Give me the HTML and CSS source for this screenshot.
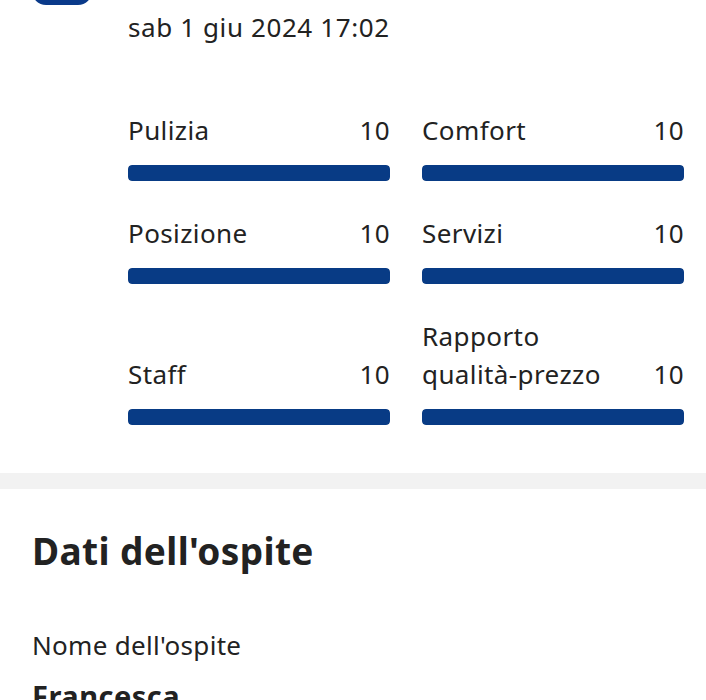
FILE: index.html
```html
<!DOCTYPE html>
<html lang="it">
<head>
<meta charset="utf-8">
<link rel="stylesheet" href="styles.css">
</head>
<body>
<section class="review">
  <div class="review-head">
    <div class="avatar"></div>
    <div class="meta">
      <div class="date">sab 1 giu 2024 17:02</div>
    </div>
  </div>
  <div class="scores">
    <div class="score">
      <div class="score-row"><span class="label">Pulizia</span><span class="value">10</span></div>
      <div class="bar"><div class="fill" style="width:100%"></div></div>
    </div>
    <div class="score">
      <div class="score-row"><span class="label">Comfort</span><span class="value">10</span></div>
      <div class="bar"><div class="fill" style="width:100%"></div></div>
    </div>
    <div class="score">
      <div class="score-row"><span class="label">Posizione</span><span class="value">10</span></div>
      <div class="bar"><div class="fill" style="width:100%"></div></div>
    </div>
    <div class="score">
      <div class="score-row"><span class="label">Servizi</span><span class="value">10</span></div>
      <div class="bar"><div class="fill" style="width:100%"></div></div>
    </div>
    <div class="score">
      <div class="score-row"><span class="label">Staff</span><span class="value">10</span></div>
      <div class="bar"><div class="fill" style="width:100%"></div></div>
    </div>
    <div class="score">
      <div class="score-row"><span class="label">Rapporto<br>qualità-prezzo</span><span class="value">10</span></div>
      <div class="bar"><div class="fill" style="width:100%"></div></div>
    </div>
  </div>
</section>
<div class="divider"></div>
<section class="guest">
  <h2 class="guest-title">Dati dell'ospite</h2>
  <div class="field-label">Nome dell'ospite</div>
  <div class="field-value">Francesca</div>
</section>
</body>
</html>
```
FILE: styles.css
```css
html, body {
  margin: 0;
  padding: 0;
  background: #ffffff;
  color: #222222;
  font-family: "Noto Sans", "Liberation Sans", sans-serif;
}
body {
  overflow: hidden;
  height: 700px;
}
.review {
  padding: 0 22px 48px 32px;
}
.review-head {
  display: flex;
  gap: 36px;
  margin-top: -55px;
}
.avatar {
  width: 60px;
  height: 60px;
  background: #0a3a8a;
  border-radius: 14px;
  flex: none;
}
.meta {
  padding-top: 66px;
}
.date {
  font-size: 26px;
  line-height: 32px;
  letter-spacing: 0.6px;
}
.scores {
  margin-top: 68px;
  margin-left: 96px;
  display: grid;
  grid-template-columns: 1fr 1fr;
  column-gap: 32px;
  row-gap: 33px;
}
.score {
  display: flex;
  flex-direction: column;
  justify-content: flex-end;
}
.score-row {
  display: flex;
  justify-content: space-between;
  align-items: flex-end;
  font-size: 26px;
  line-height: 38px;
  letter-spacing: 0.4px;
}
.bar {
  margin-top: 16px;
  height: 16px;
  border-radius: 4px;
  background: #e6e6e6;
  overflow: hidden;
}
.fill {
  height: 100%;
  background: #083b85;
  border-radius: 4px;
}
.divider {
  height: 16px;
  background: #f2f2f2;
}
.guest {
  padding: 0 32px;
}
.guest-title {
  margin: 0;
  padding-top: 40px;
  font-size: 37px;
  line-height: 44px;
  font-weight: 700;
  letter-spacing: 0.4px;
}
.field-label {
  margin-top: 55px;
  font-size: 26px;
  line-height: 34px;
  letter-spacing: 0.3px;
}
.field-value {
  margin-top: 16px;
  font-size: 29px;
  line-height: 36px;
  font-weight: 700;
  letter-spacing: 0.5px;
}
```
